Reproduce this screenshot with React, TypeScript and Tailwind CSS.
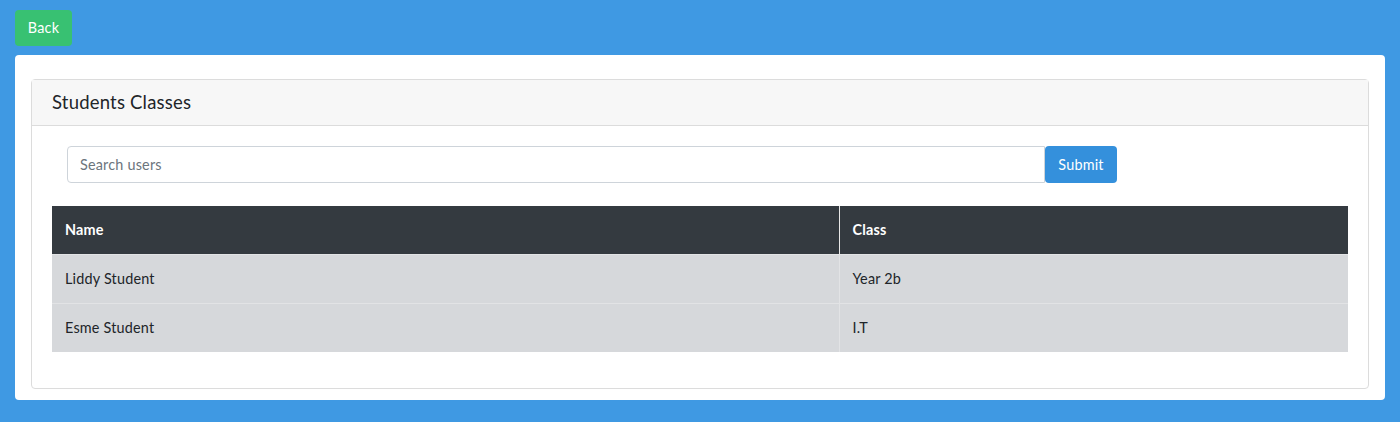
const rows = [
  { name: "Liddy Student", cls: "Year 2b" },
  { name: "Esme Student", cls: "I.T" },
];

const App = () => {
  return (
    <div className="min-h-[422px] w-full bg-[#3f99e3] px-[15px] pt-[10px] pb-[22px] font-['Lato','Noto_Sans',sans-serif] tracking-[0.2px] text-[#212529]">
      <button className="h-9 w-[57px] rounded-[4px] bg-[#38c172] text-[14.4px] text-white">Back</button>
      <div className="mt-[9px] rounded-[4px] bg-white px-4 pt-6 pb-[11px]">
        <div className="rounded-[4px] border border-[#dcdcdc]">
          <div className="h-[46px] border-b border-[#dcdcdc] bg-[#f7f7f7] px-5 flex items-center text-[18.5px]">
            Students Classes
          </div>
          <div className="p-5 pb-9">
            <div className="flex pl-[15px]">
              <input
                placeholder="Search users"
                className="h-[37px] w-[978px] rounded-l-[4px] border border-[#ced4da] px-3 text-[14.4px] placeholder:text-[#6c757d] outline-none"
              />
              <button className="h-[37px] w-[72px] rounded-[4px] bg-[#3490dc] text-[14.4px] text-white">Submit</button>
            </div>
            <table className="mt-[23px] w-full border-collapse text-[14.4px]">
              <thead>
                <tr className="h-12 bg-[#343a40] text-white font-bold">
                  <th className="w-[787px] border-r border-[#e8e8e8] pl-[13px] pr-3 text-left">Name</th>
                  <th className="pl-[13px] pr-3 text-left">Class</th>
                </tr>
              </thead>
              <tbody>
                {rows.map((r) => (
                  <tr key={r.name} className="h-[49px] border-t border-[#e2e3e5] bg-[#d6d8db]">
                    <td className="border-r border-[#e2e3e5] pl-[13px] pr-3">{r.name}</td>
                    <td className="pl-[13px] pr-3">{r.cls}</td>
                  </tr>
                ))}
              </tbody>
            </table>
          </div>
        </div>
      </div>
    </div>
  );
};

export default App;
